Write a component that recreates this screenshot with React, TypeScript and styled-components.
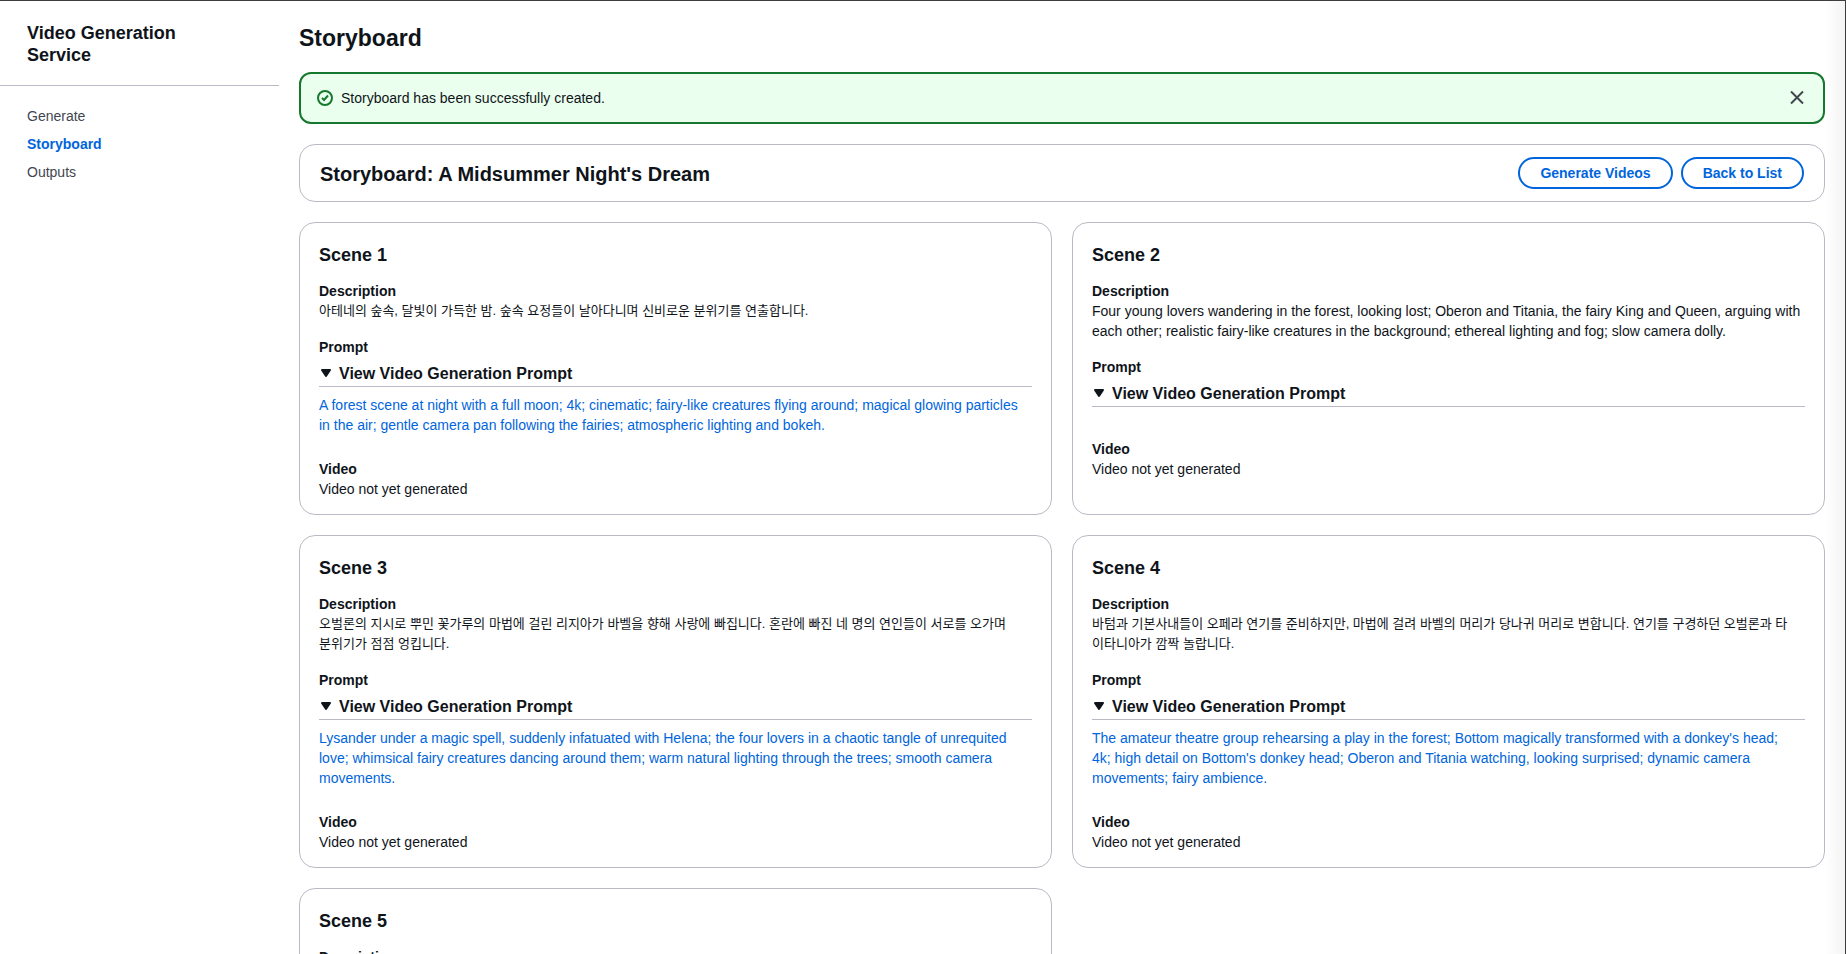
import React, { useState } from "react";
import styled, { createGlobalStyle } from "styled-components";

const ink = "#0f141a";
const line = "#b9bac5";
const blue = "#0065dc";
const green = "#16782e";

const GlobalStyle = createGlobalStyle`
  *, *::before, *::after { box-sizing: border-box; }
  body {
    margin: 0;
    background: #fff;
    color: ${ink};
    font: 14px/20px "Liberation Sans", "Noto Sans CJK KR", sans-serif;
  }
  h1, h2, h3, p, ul { margin: 0; padding: 0; }
`;

const Page = styled.div`
  display: flex;
  height: 100vh;
  overflow: hidden;
  border-top: 1px solid #3f3c40;
  border-right: 1px solid #3f3c40;
  background: linear-gradient(to left, #f4f4f5, #fff 20px);
`;

const Sidebar = styled.aside`
  flex: 0 0 279px;
`;

const ServiceTitle = styled.h2`
  padding: 21px 72px 19px 27px;
  border-bottom: 1px solid ${line};
  font-size: 18px;
  line-height: 22px;
`;

const NavList = styled.ul`
  display: flex;
  flex-direction: column;
  gap: 8px;
  padding: 20px 27px;
  list-style: none;
`;

const NavLink = styled.a<{ $active: boolean }>`
  color: ${(p) => (p.$active ? blue : "#424650")};
  font-weight: ${(p) => (p.$active ? 700 : 400)};
  text-decoration: none;
`;

const Main = styled.main`
  flex: 1;
  min-width: 0;
  display: flex;
  flex-direction: column;
  gap: 20px;
  padding: 23px 20px 40px;
  overflow-y: auto;
  scrollbar-width: none;

  & > * { flex-shrink: 0; }
`;

const PageTitle = styled.h1`
  font-size: 23px;
  line-height: 28px;
`;

const Flash = styled.div`
  display: flex;
  align-items: center;
  gap: 8px;
  height: 52px;
  padding: 0 16px;
  border: 2px solid ${green};
  border-radius: 12px;
  background: #ebffee;
`;

const FlashText = styled.p`
  flex: 1;
`;

const CloseButton = styled.button`
  display: flex;
  padding: 2px;
  border: 0;
  background: none;
  color: #424650;
  cursor: pointer;
`;

const HeaderCard = styled.header`
  display: flex;
  align-items: center;
  gap: 8px;
  padding: 12px 20px;
  border: 1px solid ${line};
  border-radius: 16px;
  background: #fff;
`;

const StoryTitle = styled.h2`
  flex: 1;
  padding-top: 2px;
  font-size: 20px;
  line-height: 24px;
`;

const OutlineButton = styled.button`
  height: 32px;
  padding: 0 20px;
  border: 2px solid ${blue};
  border-radius: 20px;
  background: #fff;
  color: ${blue};
  font: inherit;
  font-weight: 700;
  cursor: pointer;
`;

const SceneGrid = styled.div`
  display: grid;
  grid-template-columns: repeat(2, minmax(0, 1fr));
  gap: 20px;
`;

const SceneCard = styled.article`
  padding: 21px 19px 15px;
  border: 1px solid ${line};
  border-radius: 16px;
  background: #fff;
`;

const SceneTitle = styled.h3`
  margin-bottom: 15px;
  font-size: 18px;
  line-height: 22px;
`;

const Field = styled.section`
  margin-bottom: 16px;

  &:last-child { margin-bottom: 0; }
`;

const FieldLabel = styled.div`
  font-weight: 700;
`;

const FieldValue = styled.p`
  &:lang(ko) {
    padding-right: 14px;
    font-size: 13px;
  }
`;

const Expandable = styled.details`
  padding-bottom: 8px;
`;

const ExpandHeader = styled.summary`
  display: flex;
  align-items: center;
  gap: 6px;
  padding: 7px 0 2px;
  border-bottom: 1px solid ${line};
  font-size: 16px;
  font-weight: 700;
  cursor: pointer;
  list-style: none;
`;

const PromptText = styled.p`
  padding: 8px 12px 0 0;
  color: ${blue};
`;

const SuccessIcon = () => (
  <svg width="16" height="16" viewBox="0 0 16 16" fill="none" stroke={green} strokeWidth="2" aria-hidden="true">
    <circle cx="8" cy="8" r="7" />
    <path d="m5 8 2 2 4-4.500" />
  </svg>
);

const CloseIcon = () => (
  <svg width="16" height="16" viewBox="0 0 16 16" fill="none" stroke="currentColor" strokeWidth="2" aria-hidden="true">
    <path d="m2 1.500 12 12M14 1.500 2 13.500" />
  </svg>
);

const CaretIcon = () => (
  <svg width="14" height="16" viewBox="0 0 14 16" aria-hidden="true">
    <path d="M3 4h8L7 10z" fill={ink} stroke={ink} strokeWidth="2" strokeLinejoin="round" />
  </svg>
);

type Scene = { title: string; description?: string; lang?: string; prompt?: string; complete: boolean };

const scenes: Scene[] = [
  {
    title: "Scene 1",
    lang: "ko",
    description: "아테네의 숲속, 달빛이 가득한 밤. 숲속 요정들이 날아다니며 신비로운 분위기를 연출합니다.",
    prompt:
      "A forest scene at night with a full moon; 4k; cinematic; fairy-like creatures flying around; magical glowing particles in the air; gentle camera pan following the fairies; atmospheric lighting and bokeh.",
    complete: true,
  },
  {
    title: "Scene 2",
    description:
      "Four young lovers wandering in the forest, looking lost; Oberon and Titania, the fairy King and Queen, arguing with each other; realistic fairy-like creatures in the background; ethereal lighting and fog; slow camera dolly.",
    complete: true,
  },
  {
    title: "Scene 3",
    lang: "ko",
    description:
      "오벌론의 지시로 뿌민 꽃가루의 마법에 걸린 리지아가 바벨을 향해 사랑에 빠집니다. 혼란에 빠진 네 명의 연인들이 서로를 오가며 분위기가 점점 엉킵니다.",
    prompt:
      "Lysander under a magic spell, suddenly infatuated with Helena; the four lovers in a chaotic tangle of unrequited love; whimsical fairy creatures dancing around them; warm natural lighting through the trees; smooth camera movements.",
    complete: true,
  },
  {
    title: "Scene 4",
    lang: "ko",
    description:
      "바텀과 기본사내들이 오페라 연기를 준비하지만, 마법에 걸려 바벨의 머리가 당나귀 머리로 변합니다. 연기를 구경하던 오벌론과 타이타니아가 깜짝 놀랍니다.",
    prompt:
      "The amateur theatre group rehearsing a play in the forest; Bottom magically transformed with a donkey's head; 4k; high detail on Bottom's donkey head; Oberon and Titania watching, looking surprised; dynamic camera movements; fairy ambience.",
    complete: true,
  },
  { title: "Scene 5", complete: false },
];

const SceneView = ({ scene }: { scene: Scene }) => (
  <SceneCard>
    <SceneTitle>{scene.title}</SceneTitle>
    <Field>
      <FieldLabel>Description</FieldLabel>
      {scene.description && <FieldValue lang={scene.lang}>{scene.description}</FieldValue>}
    </Field>
    {scene.complete && (
      <>
        <Field>
          <FieldLabel>Prompt</FieldLabel>
          <Expandable open>
            <ExpandHeader>
              <CaretIcon />
              View Video Generation Prompt
            </ExpandHeader>
            <PromptText>{scene.prompt}</PromptText>
          </Expandable>
        </Field>
        <Field>
          <FieldLabel>Video</FieldLabel>
          <FieldValue>Video not yet generated</FieldValue>
        </Field>
      </>
    )}
  </SceneCard>
);

const navItems = ["Generate", "Storyboard", "Outputs"];

export default function App() {
  const [flashOpen, setFlashOpen] = useState(true);

  return (
    <>
      <GlobalStyle />
      <Page>
        <Sidebar>
          <ServiceTitle>Video Generation Service</ServiceTitle>
          <nav>
            <NavList>
              {navItems.map((item) => (
                <li key={item}>
                  <NavLink href={"#" + item.toLowerCase()} $active={item === "Storyboard"}>
                    {item}
                  </NavLink>
                </li>
              ))}
            </NavList>
          </nav>
        </Sidebar>
        <Main>
          <PageTitle>Storyboard</PageTitle>
          {flashOpen && (
            <Flash role="status">
              <SuccessIcon />
              <FlashText>Storyboard has been successfully created.</FlashText>
              <CloseButton type="button" aria-label="Dismiss" onClick={() => setFlashOpen(false)}>
                <CloseIcon />
              </CloseButton>
            </Flash>
          )}
          <HeaderCard>
            <StoryTitle>Storyboard: A Midsummer Night's Dream</StoryTitle>
            <OutlineButton type="button">Generate Videos</OutlineButton>
            <OutlineButton type="button">Back to List</OutlineButton>
          </HeaderCard>
          <SceneGrid>
            {scenes.map((scene) => (
              <SceneView key={scene.title} scene={scene} />
            ))}
          </SceneGrid>
        </Main>
      </Page>
    </>
  );
}
